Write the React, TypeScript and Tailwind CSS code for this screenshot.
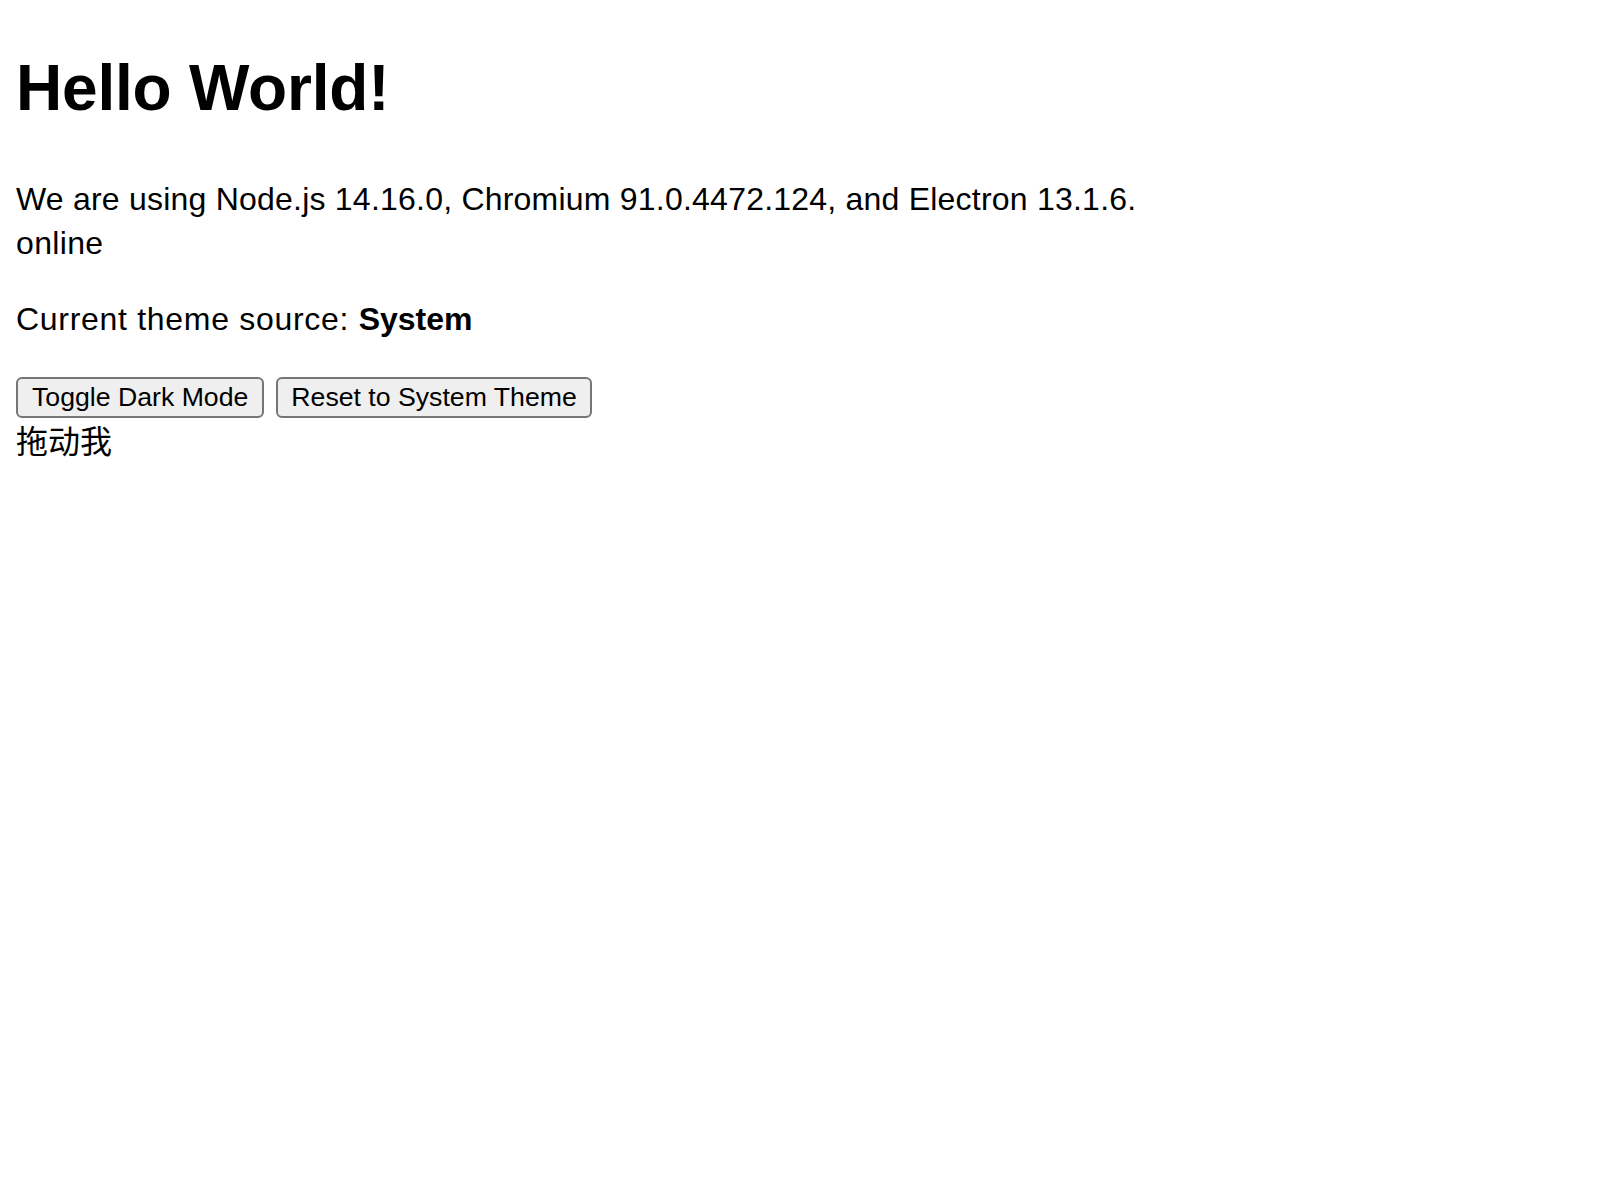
import React from "react";

export default function App() {
  return (
    <div className="min-h-screen bg-white px-[16px] pt-[44px] text-black">
      <div className="font-['Liberation_Sans','Noto_Sans_CJK_SC',sans-serif]">
        <h1 className="text-[64px] font-bold leading-[89.6px] tracking-[-0.2px]">Hello World!</h1>
        <p className="mt-[43px] text-[32px] leading-[44.8px] tracking-[0.22px]">
          We are using Node.js 14.16.0, Chromium 91.0.4472.124, and Electron 13.1.6.
        </p>
        <div className="text-[32px] leading-[44.8px] tracking-[0.35px]">online</div>
        <p className="mt-[31px] text-[32px] leading-[44.8px]">
          <span className="tracking-[0.7px]">Current theme source: </span>
          <strong className="font-bold">System</strong>
        </p>
        <div className="mt-[35px] flex gap-[12px]">
          <button className="h-[41px] rounded-[6px] border-2 border-[#767676] bg-[#efefef] px-[14px] text-[26.67px] leading-none text-black">
            Toggle Dark Mode
          </button>
          <button className="h-[41px] rounded-[6px] border-2 border-[#767676] bg-[#efefef] px-[13px] text-[26.67px] leading-none text-black">
            Reset to System Theme
          </button>
        </div>
        <div className="mt-[2px] text-[32px] leading-[44.8px]">拖动我</div>
      </div>
    </div>
  );
}
